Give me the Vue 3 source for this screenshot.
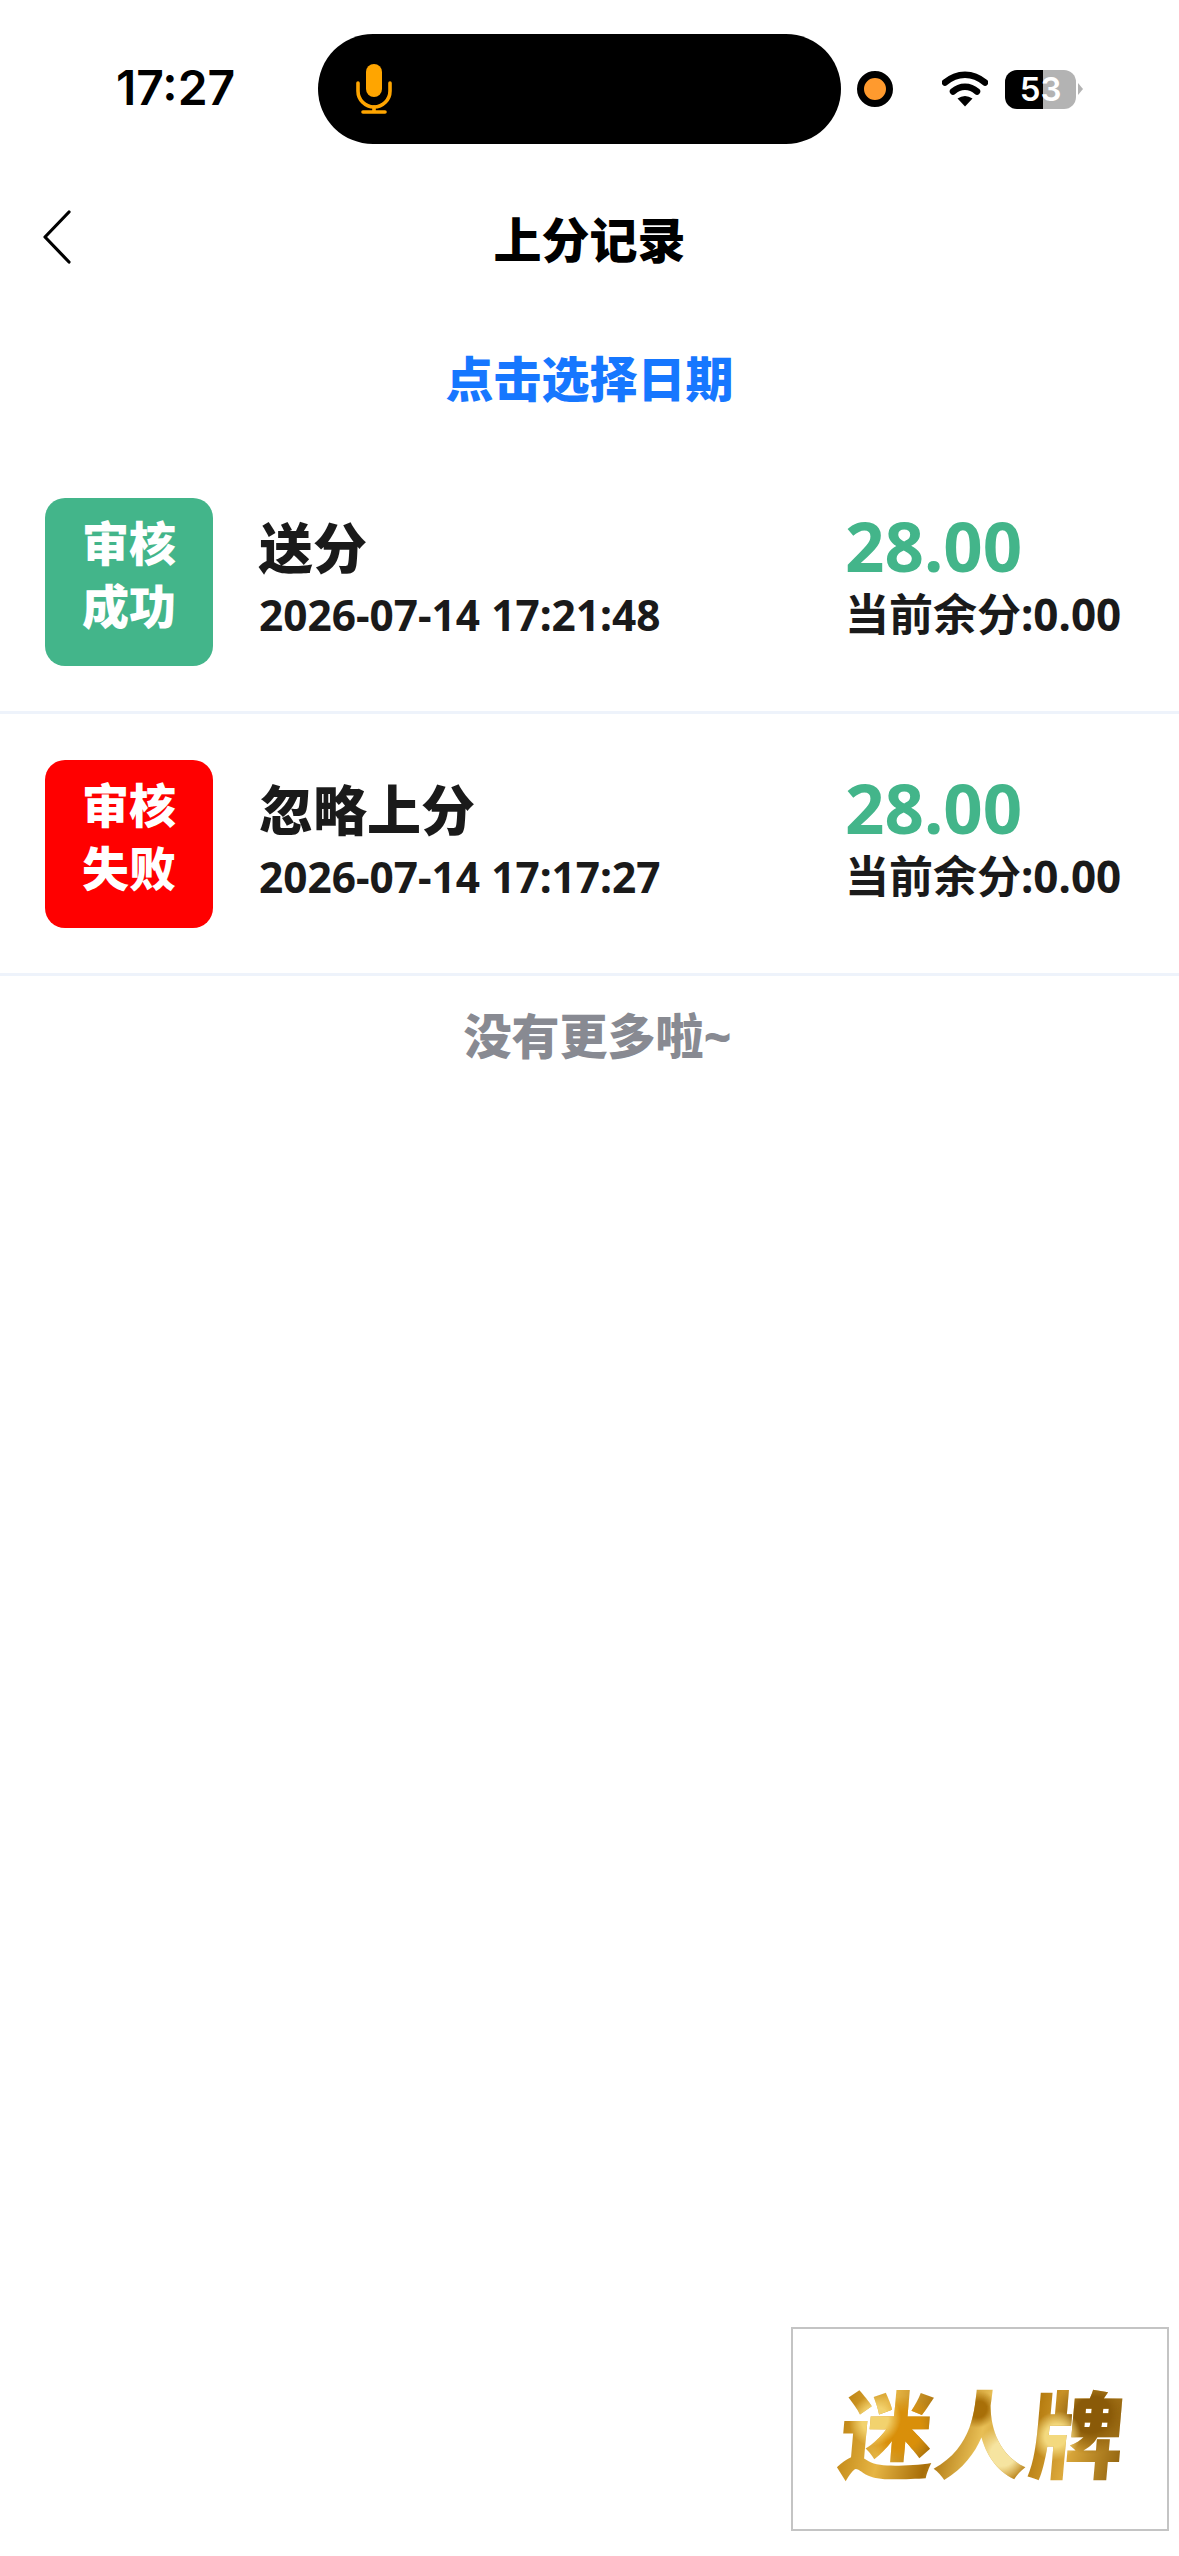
<script setup>
const records = [
  { id: 1, status: ['审核', '成功'], cls: 'ok', title: '送分', time: '2026-07-14 17:21:48', amount: '28.00', balance: '当前余分:0.00' },
  { id: 2, status: ['审核', '失败'], cls: 'fail', title: '忽略上分', time: '2026-07-14 17:17:27', amount: '28.00', balance: '当前余分:0.00' },
]
</script>

<template>
  <div class="page">
    <div class="status">
      <span class="clock">17:27</span>
      <div class="island">
        <svg class="mic" width="40" height="56" viewBox="0 0 40 56" fill="none">
          <rect x="12" y="3" width="16" height="33" rx="8" fill="#ffa500" />
          <path d="M4 22v8a16 16 0 0 0 32 0v-8" stroke="#ffa500" stroke-width="3.6" stroke-linecap="round" />
          <path d="M20 46v5M9 51h22" stroke="#ffa500" stroke-width="3.6" stroke-linecap="round" />
        </svg>
      </div>
      <span class="dot"></span>
      <svg class="wifi" width="46" height="36" viewBox="0 0 46 36" fill="none">
        <path d="M3 11.5C15 1 31 1 43 11.5" stroke="#000" stroke-width="6.5" stroke-linecap="round" />
        <path d="M11 20.5C18 14 28 14 35 20.5" stroke="#000" stroke-width="6.5" stroke-linecap="round" />
        <path d="M15.5 27.5Q23 22.500 30.500 27.500L23 35.500Z" fill="#000" />
      </svg>
      <div class="battery"><span class="level">53</span></div>
      <span class="nub"></span>
    </div>

    <header class="nav">
      <svg class="back" width="30" height="54" viewBox="0 0 30 54" fill="none">
        <path d="M27 2 3 27l24 25" stroke="#000" stroke-width="3.200" stroke-linecap="round" stroke-linejoin="round" />
      </svg>
      <h1 class="title">上分记录</h1>
      <span></span>
    </header>

    <div class="picker">点击选择日期</div>

    <ul class="list">
      <li v-for="r in records" :key="r.id" class="row">
        <div class="badge" :class="r.cls">
          <span v-for="t in r.status" :key="t">{{ t }}</span>
        </div>
        <div class="main">
          <div class="name">{{ r.title }}</div>
          <div class="time">{{ r.time }}</div>
        </div>
        <div class="side">
          <div class="amount">{{ r.amount }}</div>
          <div class="balance">{{ r.balance }}</div>
        </div>
      </li>
    </ul>

    <div class="end">没有更多啦~</div>

    <div class="logo"><span class="logo-text">迷人牌</span></div>
  </div>
</template>

<style>
html, body { margin: 0; background: #fff; }
</style>

<style scoped>
.page {
  position: relative;
  height: 2556px;
  overflow: hidden;
  background: #fff;
  font-family: "Noto Sans", "Noto Sans CJK SC", sans-serif;
}
.status {
  display: flex;
  align-items: center;
  height: 110px;
  padding: 34px 0 0 116px;
}
.clock {
  width: 202px;
  margin-top: -2px;
  font: 600 48px/1 Inter, sans-serif;
  color: #000;
}
.island {
  display: flex;
  align-items: center;
  width: 523px;
  height: 110px;
  padding-left: 36px;
  box-sizing: border-box;
  border-radius: 55px;
  background: #000;
}
.mic { display: block; }
.dot {
  width: 22px;
  height: 22px;
  margin-left: 16px;
  border: 7px solid #000;
  border-radius: 50%;
  background: #ff9a2e;
  box-sizing: content-box;
}
.wifi { margin-left: 49px; display: block; }
.battery {
  width: 71px;
  height: 39px;
  margin-left: 17px;
  border-radius: 12px;
  background: linear-gradient(90deg, #000 0 38px, #b3b3b3 38px);
  text-align: center;
  font: 600 33px/39px Inter, sans-serif;
  color: #fff;
}
.level { display: block; }
.nub {
  width: 0;
  height: 0;
  margin-left: 2px;
  border-left: 5px solid #b3b3b3;
  border-top: 6px solid transparent;
  border-bottom: 6px solid transparent;
}
.nav {
  display: grid;
  grid-template-columns: 1fr auto 1fr;
  align-items: center;
  height: 96px;
  margin-top: 48px;
  padding-left: 42px;
  padding-right: 42px;
}
.back { display: block; margin-top: -7px; }
.title {
  margin: 0;
  font-size: 48px;
  font-weight: 900;
  line-height: 72px;
  color: #000;
}
.picker {
  margin-top: 55px;
  text-align: center;
  font-size: 48px;
  font-weight: 900;
  line-height: 72px;
  color: #1677ff;
}
.list {
  list-style: none;
  margin: 37px 0 0;
  padding: 0;
}
.row {
  display: flex;
  align-items: flex-start;
  padding: 46px 45px 45px;
  border-bottom: 3px solid #eef3fb;
}
.badge {
  display: flex;
  flex-direction: column;
  align-items: center;
  justify-content: center;
  flex: none;
  width: 168px;
  height: 168px;
  padding-bottom: 15px;
  box-sizing: border-box;
  border-radius: 20px;
  color: #fff;
  font-size: 47px;
  font-weight: 900;
  line-height: 63px;
}
.ok { background: #43b58a; }
.fail { background: #ff0000; }
.main {
  flex: 1;
  margin-left: 46px;
}
.name {
  margin-top: 12px;
  font-size: 54px;
  font-weight: 900;
  line-height: 76px;
  color: #1a1a1a;
}
.time {
  margin-top: 1px;
  font-size: 42.4px;
  font-weight: 700;
  line-height: 56px;
  color: #1a1a1a;
}
.side {
  width: 242px;
  margin-right: 47px;
  flex: none;
  white-space: nowrap;
}
.amount {
  margin-top: 7px;
  font-size: 69px;
  font-weight: 700;
  line-height: 80px;
  color: #43b58a;
}
.balance {
  margin-top: 1px;
  font-size: 44px;
  font-weight: 700;
  line-height: 56px;
  color: #1a1a1a;
}
.end {
  margin-top: 24px;
  padding-left: 16px;
  text-align: center;
  font-size: 48px;
  font-weight: 900;
  line-height: 72px;
  color: #888a92;
}
.logo {
  position: absolute;
  left: 791px;
  top: 2327px;
  display: flex;
  align-items: center;
  justify-content: center;
  width: 378px;
  height: 204px;
  box-sizing: border-box;
  border: 2px solid #c4c4c4;
  background: #fff;
}
.logo-text {
  display: block;
  margin: 2px 0 0 6px;
  transform: skewX(-5deg);
  font-family: "Noto Sans CJK SC", sans-serif;
  font-size: 95px;
  font-weight: 900;
  line-height: 1.1;
  color: transparent;
  background:
    radial-gradient(circle at 12% 40%, #f2d26e 0 5%, transparent 10%),
    radial-gradient(circle at 22% 50%, #d98f0a 0 8%, transparent 15%),
    radial-gradient(circle at 48% 30%, #a86f08 0 5%, transparent 11%),
    radial-gradient(circle at 58% 72%, #f6e4a0 0 7%, transparent 16%),
    radial-gradient(circle at 76% 55%, #f3d97e 0 5%, transparent 11%),
    radial-gradient(circle at 88% 35%, #8a5a08 0 7%, transparent 15%),
    linear-gradient(100deg, #b97d0c 0%, #e6b544 18%, #a86e08 34%, #e8bf56 50%, #b47a0e 66%, #dca93c 80%, #8d5f0c 100%);
  -webkit-background-clip: text;
  background-clip: text;
}
</style>
